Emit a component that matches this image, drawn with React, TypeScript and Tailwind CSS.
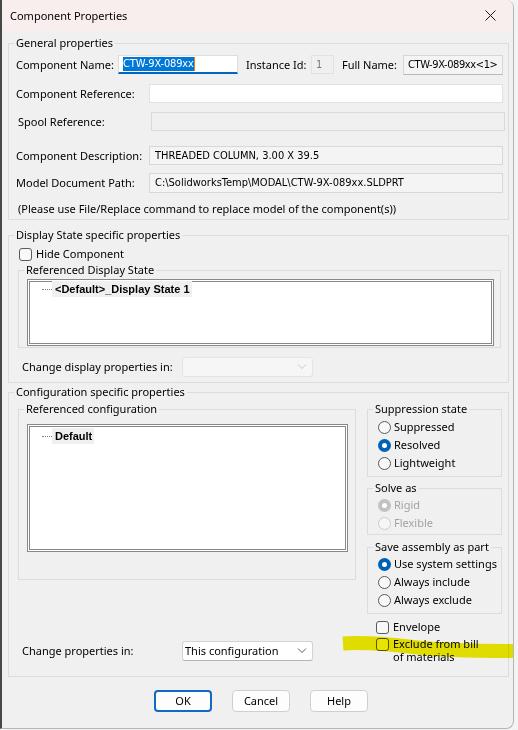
import React from "react";

const BOX = "font-['DejaVu_Sans_Condensed','Liberation_Sans',sans-serif] text-[11px]";

function Group({ title, className, children }: { title: string; className: string; children: React.ReactNode }) {
  return (
    <fieldset className={className}>
      <legend className="ml-[5px] px-[2px] leading-[16px]">{title}</legend>
      {children}
    </fieldset>
  );
}

function Radio({ label, checked = false, disabled = false }: { label: string; checked?: boolean; disabled?: boolean }) {
  return (
    <div className="flex h-[18px] items-center">
      {checked ? (
        <span className={disabled ? "flex h-[13px] w-[13px] items-center justify-center rounded-full bg-[#c2c2c2]" : "flex h-[13px] w-[13px] items-center justify-center rounded-full bg-[#0061b5]"}>
          <span className="h-[5px] w-[5px] rounded-full bg-white" />
        </span>
      ) : (
        <span className={disabled ? "h-[13px] w-[13px] rounded-full border border-[#cccccc] bg-[#f6f6f6]" : "h-[13px] w-[13px] rounded-full border border-[#5a5a5a] bg-[#f8f8f8]"} />
      )}
      <span className={disabled ? "ml-[3px] text-[#a3a3a3]" : "ml-[3px]"}>{label}</span>
    </div>
  );
}

function Check() {
  return <span className="block h-[13px] w-[13px] shrink-0 rounded-[3px] border border-[#5a5a5a] bg-[#f8f8f8]" />;
}

function Chevron({ disabled }: { disabled?: boolean }) {
  return (
    <svg width="10" height="6" viewBox="0 0 10 6">
      <path d="M1 0.5 L5 4.5 L9 0.5" fill="none" stroke={disabled ? "#c8c8c8" : "#606060"} strokeWidth="1" />
    </svg>
  );
}

export default function App() {
  return (
    <div className="relative h-[730px] w-[518px] overflow-hidden bg-[#f3f3f3] font-['Noto_Sans',sans-serif] text-[11px] leading-[16px] text-black">
      <div className="flex h-[729px] w-[514px] flex-col overflow-hidden rounded-tr-[8px] rounded-br-[8px] border-b border-l-2 border-r border-b-[#b5b5b5] border-l-[#474747] border-r-[#b5b5b5] bg-[#f0f0f0]">
        {/* Title bar */}
        <div className="flex h-[31px] shrink-0 items-center justify-between bg-[#f8eeee]">
          <span className="ml-[8px] text-[11px]">Component Properties</span>
          <div className="flex h-[31px] w-[46px] items-center justify-center">
            <svg width="11" height="11" viewBox="0 0 11 11">
              <path d="M0.5 0.5 L10.5 10.5 M10.5 0.5 L0.5 10.5" stroke="#1a1a1a" strokeWidth="1" fill="none" />
            </svg>
          </div>
        </div>

        {/* General properties */}
        <Group title="General properties" className="ml-[6px] mt-[4px] w-[501px] border border-[#dcdcdc]">
          <div className="pb-[2px] pl-[7px]">
            <div className="mt-[4px] flex h-[20px] items-start">
              <span className="flex h-[20px] w-[102px] items-center">Component Name:</span>
              <div className="flex h-[19px] w-[120px] items-start border border-b-2 border-[#dedede] border-b-[#0067c0] bg-white pl-[4px] pt-[1px]">
                <span className={`${BOX} whitespace-nowrap bg-[#0078d7] leading-[14px] tracking-[-0.15px] text-white`}>CTW-9X-089xx</span>
                <span className="h-[14px] w-[1px] bg-[#e07a1f]" />
              </div>
              <span className="ml-[8px] flex h-[20px] w-[65px] items-center">Instance Id:</span>
              <div className="flex h-[19px] w-[23px] items-center border border-[#e2e2e2] bg-[#f0f0f0] pl-[4px] text-[#7a7a7a]">
                <span className={BOX}>1</span>
              </div>
              <span className="ml-[8px] flex h-[20px] w-[61px] items-center">Full Name:</span>
              <div className="flex h-[20px] w-[100px] items-center overflow-hidden border border-[#d6d6d6] border-b-[#b8b8b8] bg-[#f4f4f4] pl-[4px]">
                <span className={`${BOX} whitespace-nowrap tracking-[-0.4px]`}>CTW-9X-089xx&lt;1&gt;</span>
              </div>
            </div>

            <div className="mt-[9px] flex h-[19px] items-center">
              <span className="w-[133px]">Component Reference:</span>
              <div className="h-[19px] w-[354px] border border-[#e1e1e1] bg-white" />
            </div>

            <div className="mt-[9px] flex h-[19px] items-center">
              <span className="w-[135px] pl-[2px]">Spool Reference:</span>
              <div className="h-[19px] w-[354px] border border-[#dadada] bg-[#f0f0f0]" />
            </div>

            <div className="mt-[15px] flex h-[19px] items-center">
              <span className="w-[133px]">Component Description:</span>
              <div className="flex h-[19px] w-[354px] items-center border border-[#d8d8d8] bg-[#f4f4f4] pl-[5px]">
                <span className={BOX}>THREADED COLUMN, 3.00 X 39.5</span>
              </div>
            </div>

            <div className="mt-[8px] flex h-[20px] items-center">
              <span className="w-[133px]">Model Document Path:</span>
              <div className="flex h-[20px] w-[354px] items-center border border-[#d8d8d8] bg-[#f4f4f4] pl-[5px]">
                <span className={BOX}>C:\SolidworksTemp\MODAL\CTW-9X-089xx.SLDPRT</span>
              </div>
            </div>

            <div className="mt-[8px] h-[16px] pl-[2px]">(Please use File/Replace command to replace model of the component(s))</div>
          </div>
        </Group>

        {/* Display State specific properties */}
        <Group title="Display State specific properties" className="ml-[6px] mt-[7px] w-[501px] border border-[#dcdcdc]">
          <div className="pb-[5px] pl-[7px]">
            <div className="mt-[3px] flex h-[16px] items-center">
              <span className="ml-[3px]">
                <Check />
              </span>
              <span className="ml-[4px]">Hide Component</span>
            </div>
            <Group title="Referenced Display State" className="ml-[2px] w-[483px] border border-[#dcdcdc]">
              <div className="pb-[1px] pl-[8px] pt-[1px]">
                <div className="h-[67px] w-[467px] border-[3px] border-double border-[#85888d] bg-white">
                  <div className="mt-[-1px] flex h-[16px] items-center">
                    <span className="ml-[12px] w-[10px] border-t border-dotted border-[#808080]" />
                    <span className="bg-[#f0f0f0] pl-[3px] pr-[2px] font-['Liberation_Sans',sans-serif] text-[11px] font-bold leading-[16px]">
                      &lt;Default&gt;_Display State 1
                    </span>
                  </div>
                </div>
              </div>
            </Group>
            <div className="mt-[9px] flex h-[20px] items-center">
              <span className="ml-[6px] w-[160px]">Change display properties in:</span>
              <div className="flex h-[20px] w-[131px] items-center justify-end rounded-[3px] border border-[#e4e4e4] bg-[#f6f6f6] pr-[5px]">
                <Chevron disabled />
              </div>
            </div>
          </div>
        </Group>

        {/* Configuration specific properties */}
        <Group title="Configuration specific properties" className="ml-[6px] mt-[1px] w-[501px] border border-[#dcdcdc]">
          <div className="flex h-[276px] pl-[7px]">
            {/* Left column */}
            <div className="ml-[2px] flex w-[338px] flex-col">
              <Group title="Referenced configuration" className="mt-[1px] w-[338px] border border-[#dcdcdc]">
                <div className="pb-[27px] pl-[8px] pt-[7px]">
                  <div className="h-[128px] w-[321px] border-[3px] border-double border-[#85888d] bg-white">
                    <div className="mt-[1px] flex h-[16px] items-center">
                      <span className="ml-[12px] w-[10px] border-t border-dotted border-[#808080]" />
                      <span className="bg-[#f0f0f0] pl-[3px] pr-[2px] font-['Liberation_Sans',sans-serif] text-[11px] font-bold leading-[16px]">
                        Default
                      </span>
                    </div>
                  </div>
                </div>
              </Group>
              <div className="mt-[61px] flex h-[20px] items-center">
                <span className="ml-[4px] w-[160px]">Change properties in:</span>
                <div className="flex h-[20px] w-[131px] items-center justify-between rounded-[3px] border border-[#d3d3d3] border-b-[#b4b4b4] bg-white pl-[2px] pr-[5px]">
                  <span>This configuration</span>
                  <Chevron />
                </div>
              </div>
            </div>

            {/* Right column */}
            <div className="ml-[11px] flex w-[135px] flex-col">
              <Group title="Suppression state" className="mt-[1px] w-[135px] border border-[#dcdcdc]">
                <div className="pb-[4px] pl-[10px] pt-[1px]">
                  <Radio label="Suppressed" />
                  <Radio label="Resolved" checked />
                  <Radio label="Lightweight" />
                </div>
              </Group>
              <Group title="Solve as" className="mt-[3px] w-[135px] border border-[#dcdcdc]">
                <div className="pb-[2px] pl-[10px]">
                  <Radio label="Rigid" checked disabled />
                  <Radio label="Flexible" disabled />
                </div>
              </Group>
              <Group title="Save assembly as part" className="mt-[4px] w-[135px] border border-[#dcdcdc]">
                <div className="pb-[4px] pl-[10px]">
                  <Radio label="Use system settings" checked />
                  <Radio label="Always include" />
                  <Radio label="Always exclude" />
                </div>
              </Group>
              <div className="ml-[9px] mt-[5px] flex h-[16px] items-center">
                <Check />
                <span className="ml-[4px]">Envelope</span>
              </div>
              <div className="ml-[9px] mt-[2px] flex items-start">
                <span className="mt-[1px]">
                  <Check />
                </span>
                <span className="ml-[4px] flex flex-col">
                  <span className="h-[13px] leading-[13px]">Exclude from bill</span>
                  <span className="h-[13px] leading-[13px]">of materials</span>
                </span>
              </div>
            </div>
          </div>
        </Group>

        {/* Buttons */}
        <div className="mt-[13px] flex">
          <button className="ml-[152px] h-[22px] w-[58px] rounded-[4px] border-2 border-[#1169c4] bg-[#fdfdfd] leading-[16px]">OK</button>
          <button className="ml-[20px] h-[22px] w-[58px] rounded-[4px] border border-[#cfcfcf] bg-[#fdfdfd] leading-[16px]">Cancel</button>
          <button className="ml-[20px] h-[22px] w-[58px] rounded-[4px] border border-[#cfcfcf] bg-[#fdfdfd] leading-[16px]">Help</button>
        </div>
      </div>

      {/* Yellow highlighter stroke */}
      <svg className="pointer-events-none absolute left-[338px] top-[630px] mix-blend-multiply" width="180" height="36" viewBox="0 0 180 36">
        <path
          d="M5 13.5 C 30 12, 50 14, 75 17 S 130 21, 175 21"
          fill="none"
          stroke="#efea00"
          strokeWidth="14"
          strokeLinecap="butt"
        />
      </svg>
    </div>
  );
}
